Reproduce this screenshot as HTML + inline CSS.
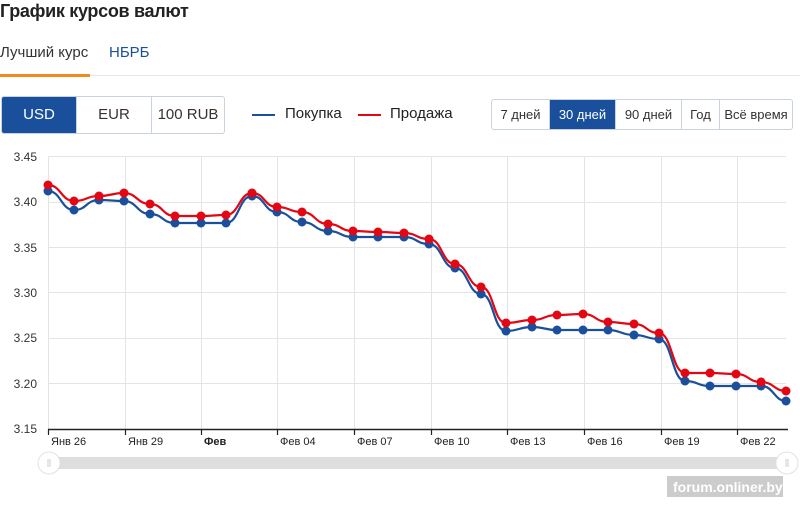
<!DOCTYPE html>
<html><head><meta charset="utf-8"><style>
body{margin:0;width:800px;height:509px;background:#fff;font-family:"Liberation Sans",sans-serif;position:relative;overflow:hidden;color:#222}
.abs{position:absolute}
h1{position:absolute;left:0;top:1px;margin:0;font-size:18px;font-weight:bold;color:#222;letter-spacing:-0.3px}
.tab{position:absolute;top:44px;font-size:15px}
.btns{position:absolute;display:flex;border:1px solid #c9d3dd;border-radius:3px;overflow:hidden}
.btns div{border-left:1px solid #c9d3dd;text-align:center;color:#333}
.btns div:first-child{border-left:none}
.btns .on{background:#1a4f9c;color:#fff}
</style></head><body>
<h1>График курсов валют</h1>
<div class="tab" style="left:0;color:#333">Лучший курс</div>
<div class="tab" style="left:109px;color:#1a4f9c">НБРБ</div>
<div class="abs" style="left:0;top:74px;width:90px;height:3px;background:#f08c1e"></div>
<div class="abs" style="left:90px;top:75px;width:710px;height:1px;background:#e6e6e6"></div>

<div class="btns" style="left:1px;top:96px;height:36px;font-size:15px;line-height:36px">
<div class="on" style="width:74px">USD</div><div style="width:74px">EUR</div><div style="width:72px">100 RUB</div></div>

<div class="abs" style="left:252px;top:114px;width:23px;height:2px;background:#1a4f9c"></div>
<div class="abs" style="left:285px;top:105px;font-size:15px">Покупка</div>
<div class="abs" style="left:358px;top:114px;width:23px;height:2px;background:#e30613"></div>
<div class="abs" style="left:390px;top:105px;font-size:15px">Продажа</div>

<div class="btns" style="left:491px;top:99px;height:29px;font-size:13px;line-height:29px">
<div style="width:57px">7 дней</div><div class="on" style="width:65px">30 дней</div><div style="width:65px">90 дней</div><div style="width:37px">Год</div><div style="width:72px">Всё время</div></div>

<svg class="abs" style="left:0;top:0" width="800" height="509">
<g stroke="#e4e4e4" stroke-width="1">
<line x1="48" y1="156.5" x2="786" y2="156.5"/><line x1="48" y1="202.5" x2="786" y2="202.5"/><line x1="48" y1="247.5" x2="786" y2="247.5"/><line x1="48" y1="292.5" x2="786" y2="292.5"/><line x1="48" y1="338.5" x2="786" y2="338.5"/><line x1="48" y1="383.5" x2="786" y2="383.5"/>
<line x1="48.5" y1="156" x2="48.5" y2="429"/><line x1="125.5" y1="156" x2="125.5" y2="429"/><line x1="201.5" y1="156" x2="201.5" y2="429"/><line x1="277.5" y1="156" x2="277.5" y2="429"/><line x1="354.5" y1="156" x2="354.5" y2="429"/><line x1="431.5" y1="156" x2="431.5" y2="429"/><line x1="507.5" y1="156" x2="507.5" y2="429"/><line x1="584.5" y1="156" x2="584.5" y2="429"/><line x1="661.5" y1="156" x2="661.5" y2="429"/><line x1="737.5" y1="156" x2="737.5" y2="429"/>
</g>
<line x1="48" y1="429.5" x2="788" y2="429.5" stroke="#222" stroke-width="1.5"/>
<g stroke="#222" stroke-width="1.2">
<line x1="48.5" y1="429" x2="48.5" y2="435"/><line x1="125.5" y1="429" x2="125.5" y2="435"/><line x1="201.5" y1="429" x2="201.5" y2="435"/><line x1="277.5" y1="429" x2="277.5" y2="435"/><line x1="354.5" y1="429" x2="354.5" y2="435"/><line x1="431.5" y1="429" x2="431.5" y2="435"/><line x1="507.5" y1="429" x2="507.5" y2="435"/><line x1="584.5" y1="429" x2="584.5" y2="435"/><line x1="661.5" y1="429" x2="661.5" y2="435"/><line x1="737.5" y1="429" x2="737.5" y2="435"/>
</g>
<g font-family="Liberation Sans,sans-serif" font-size="12" fill="#333" text-anchor="end">
<text x="37" y="161">3.45</text><text x="37" y="206">3.40</text><text x="37" y="252">3.35</text><text x="37" y="297">3.30</text><text x="37" y="342">3.25</text><text x="37" y="388">3.20</text><text x="37" y="433">3.15</text>
</g>
<g font-family="Liberation Sans,sans-serif" font-size="11" fill="#222">
<text x="51" y="445">Янв 26</text><text x="128" y="445">Янв 29</text><text x="204" y="445" font-weight="bold">Фев</text><text x="280" y="445">Фев 04</text><text x="357" y="445">Фев 07</text><text x="434" y="445">Фев 10</text><text x="510" y="445">Фев 13</text><text x="587" y="445">Фев 16</text><text x="664" y="445">Фев 19</text><text x="740" y="445">Фев 22</text>
</g>
<path fill="none" stroke="#1a4f9c" stroke-width="2.2" d="M48 191 C61 191 61 210 74 210 S86 200 99 200 S111 201 124 201 S137 214 150 214 S162 223 175 223 S188 223 201 223 S213 223 226 223 S239 196 252 196 S264 212 277 212 S289 222 302 222 S315 231 328 231 S340 237 353 237 S365 237 378 237 S391 237 404 237 S416 244 429 244 S442 268 455 268 S468 294 481 294 S493 331 506 331 S519 327 532 327 S544 330 557 330 S570 330 583 330 S595 330 608 330 S621 335 634 335 S646 339 659 339 S672 381 685 381 S697 386 710 386 S723 386 736 386 S748 386 761 386 S774 401 786 401"/>
<path fill="none" stroke="#e30613" stroke-width="2.2" d="M48 185 C61 185 61 201 74 201 S86 196 99 196 S111 193 124 193 S137 204 150 204 S162 216 175 216 S188 216 201 216 S213 215 226 215 S239 193 252 193 S264 207 277 207 S289 212 302 212 S315 224 328 224 S340 231 353 231 S365 232 378 232 S391 233 404 233 S416 239 429 239 S442 264 455 264 S468 287 481 287 S493 323 506 323 S519 320 532 320 S544 315 557 315 S570 314 583 314 S595 322 608 322 S621 324 634 324 S646 333 659 333 S672 373 685 373 S697 373 710 373 S723 374 736 374 S748 382 761 382 S774 391 786 391"/>
<g fill="#1a4f9c">
<circle cx="48" cy="191" r="4.5"/><circle cx="74" cy="210" r="4.5"/><circle cx="99" cy="200" r="4.5"/><circle cx="124" cy="201" r="4.5"/><circle cx="150" cy="214" r="4.5"/><circle cx="175" cy="223" r="4.5"/><circle cx="201" cy="223" r="4.5"/><circle cx="226" cy="223" r="4.5"/><circle cx="252" cy="196" r="4.5"/><circle cx="277" cy="212" r="4.5"/><circle cx="302" cy="222" r="4.5"/><circle cx="328" cy="231" r="4.5"/><circle cx="353" cy="237" r="4.5"/><circle cx="378" cy="237" r="4.5"/><circle cx="404" cy="237" r="4.5"/><circle cx="429" cy="244" r="4.5"/><circle cx="455" cy="268" r="4.5"/><circle cx="481" cy="294" r="4.5"/><circle cx="506" cy="331" r="4.5"/><circle cx="532" cy="327" r="4.5"/><circle cx="557" cy="330" r="4.5"/><circle cx="583" cy="330" r="4.5"/><circle cx="608" cy="330" r="4.5"/><circle cx="634" cy="335" r="4.5"/><circle cx="659" cy="339" r="4.5"/><circle cx="685" cy="381" r="4.5"/><circle cx="710" cy="386" r="4.5"/><circle cx="736" cy="386" r="4.5"/><circle cx="761" cy="386" r="4.5"/><circle cx="786" cy="401" r="4.5"/>
</g>
<g fill="#e30613">
<circle cx="48" cy="185" r="4.5"/><circle cx="74" cy="201" r="4.5"/><circle cx="99" cy="196" r="4.5"/><circle cx="124" cy="193" r="4.5"/><circle cx="150" cy="204" r="4.5"/><circle cx="175" cy="216" r="4.5"/><circle cx="201" cy="216" r="4.5"/><circle cx="226" cy="215" r="4.5"/><circle cx="252" cy="193" r="4.5"/><circle cx="277" cy="207" r="4.5"/><circle cx="302" cy="212" r="4.5"/><circle cx="328" cy="224" r="4.5"/><circle cx="353" cy="231" r="4.5"/><circle cx="378" cy="232" r="4.5"/><circle cx="404" cy="233" r="4.5"/><circle cx="429" cy="239" r="4.5"/><circle cx="455" cy="264" r="4.5"/><circle cx="481" cy="287" r="4.5"/><circle cx="506" cy="323" r="4.5"/><circle cx="532" cy="320" r="4.5"/><circle cx="557" cy="315" r="4.5"/><circle cx="583" cy="314" r="4.5"/><circle cx="608" cy="322" r="4.5"/><circle cx="634" cy="324" r="4.5"/><circle cx="659" cy="333" r="4.5"/><circle cx="685" cy="373" r="4.5"/><circle cx="710" cy="373" r="4.5"/><circle cx="736" cy="374" r="4.5"/><circle cx="761" cy="382" r="4.5"/><circle cx="786" cy="391" r="4.5"/>
</g>
<rect x="48" y="457" width="740" height="12" fill="#dedede"/>
<circle cx="49" cy="463" r="11" fill="#fff" stroke="#e2e2e2"/>
<circle cx="787" cy="463" r="11" fill="#fff" stroke="#e2e2e2"/>
<g stroke="#ccc"><line x1="48" y1="459" x2="48" y2="467"/><line x1="50" y1="459" x2="50" y2="467"/><line x1="786" y1="459" x2="786" y2="467"/><line x1="788" y1="459" x2="788" y2="467"/></g>
<rect x="667" y="476" width="116" height="21" fill="#aaa" opacity="0.6"/>
<text x="673" y="492" font-family="Liberation Sans,sans-serif" font-size="14" font-weight="bold" fill="#fff">forum.onliner.by</text>
</svg>
</body></html>
